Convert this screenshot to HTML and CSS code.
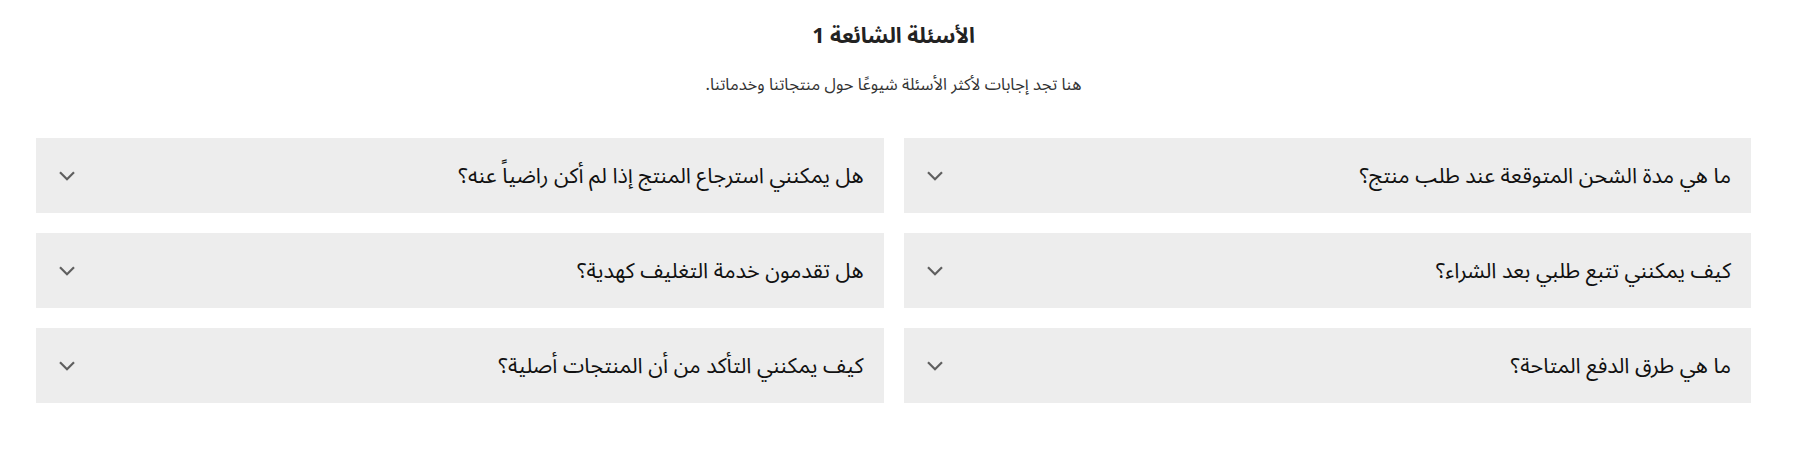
FILE: index.html
```html
<!DOCTYPE html>
<html lang="ar" dir="rtl">
<head>
<meta charset="utf-8">
<title>الأسئلة الشائعة</title>
<link rel="stylesheet" href="styles.css">
</head>
<body>
<section class="faq">
  <header class="faq-head">
    <h2 class="faq-title">الأسئلة الشائعة 1</h2>
    <p class="faq-sub">هنا تجد إجابات لأكثر الأسئلة شيوعًا حول منتجاتنا وخدماتنا.</p>
  </header>
  <div class="faq-grid">
    <div class="faq-item"><span class="q">ما هي مدة الشحن المتوقعة عند طلب منتج؟</span><svg class="chev" width="16" height="10" viewBox="0 0 16 10"><path d="M1 1.2 L8 8.2 L15 1.2" fill="none" stroke="#5f5f5f" stroke-width="2.2"/></svg></div>
    <div class="faq-item"><span class="q">هل يمكنني استرجاع المنتج إذا لم أكن راضياً عنه؟</span><svg class="chev" width="16" height="10" viewBox="0 0 16 10"><path d="M1 1.2 L8 8.2 L15 1.2" fill="none" stroke="#5f5f5f" stroke-width="2.2"/></svg></div>
    <div class="faq-item"><span class="q">كيف يمكنني تتبع طلبي بعد الشراء؟</span><svg class="chev" width="16" height="10" viewBox="0 0 16 10"><path d="M1 1.2 L8 8.2 L15 1.2" fill="none" stroke="#5f5f5f" stroke-width="2.2"/></svg></div>
    <div class="faq-item"><span class="q">هل تقدمون خدمة التغليف كهدية؟</span><svg class="chev" width="16" height="10" viewBox="0 0 16 10"><path d="M1 1.2 L8 8.2 L15 1.2" fill="none" stroke="#5f5f5f" stroke-width="2.2"/></svg></div>
    <div class="faq-item"><span class="q">ما هي طرق الدفع المتاحة؟</span><svg class="chev" width="16" height="10" viewBox="0 0 16 10"><path d="M1 1.2 L8 8.2 L15 1.2" fill="none" stroke="#5f5f5f" stroke-width="2.2"/></svg></div>
    <div class="faq-item"><span class="q">كيف يمكنني التأكد من أن المنتجات أصلية؟</span><svg class="chev" width="16" height="10" viewBox="0 0 16 10"><path d="M1 1.2 L8 8.2 L15 1.2" fill="none" stroke="#5f5f5f" stroke-width="2.2"/></svg></div>
  </div>
</section>
</body>
</html>
```
FILE: styles.css
```css
html, body {
  margin: 0;
  padding: 0;
  background: #ffffff;
}
body {
  font-family: "Noto Sans Arabic", "Noto Sans", "DejaVu Sans", sans-serif;
  color: #111111;
}
.faq {
  padding: 0 52px 0 36px;
}
.faq-head {
  text-align: center;
  padding-top: 20px;
}
.faq-title {
  margin: 0;
  font-size: 21.5px;
  font-weight: 700;
  line-height: 32px;
  color: #222222;
}
.faq-sub {
  margin: 21px 0 0;
  font-size: 16.5px;
  line-height: 24px;
  color: #333333;
}
.faq-grid {
  margin-top: 41px;
  display: grid;
  grid-template-columns: 1fr 1fr;
  column-gap: 20px;
  row-gap: 20px;
}
.faq-item {
  height: 75px;
  background: #ededed;
  display: flex;
  align-items: center;
  justify-content: space-between;
  padding: 0 20px 0 23px;
}
.q {
  font-size: 21.5px;
  color: #111111;
}
.chev {
  display: block;
  flex: none;
}
```
